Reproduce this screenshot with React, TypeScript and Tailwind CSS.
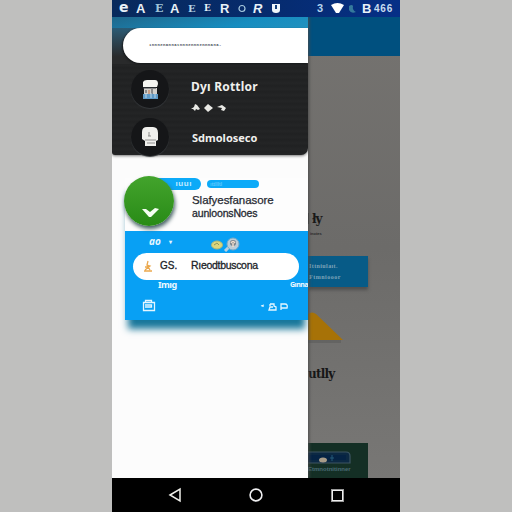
import React from "react";

function StatusBar() {
  return (
    <header className="flex h-[17px] shrink-0 items-center bg-gradient-to-r from-[#082a5c] via-[#062b6c] to-[#062f87] font-['Liberation_Sans'] text-[11px] font-bold leading-none text-[#e8f1f7]">
      <span className="ml-[7px] w-[17px] pb-[2px] font-['DejaVu_Sans'] text-[14px] leading-[15px]">e</span>
      <span className="w-[19px] text-[13px]">A</span>
      <span className="w-[15px] font-['DejaVu_Serif'] text-[11px] text-[#9fc4d8]">E</span>
      <span className="w-[18px] text-[13px]">A</span>
      <span className="w-[16px] font-['DejaVu_Serif'] text-[10px] text-[#b8d6e6]">E</span>
      <span className="w-[16px] font-['DejaVu_Serif'] text-[9px]">E</span>
      <span className="w-[18px] text-[13px]">R</span>
      <svg className="mr-[7px] h-[9px] w-[8px]" viewBox="0 0 8 9" fill="none" stroke="#a9cbe0" strokeWidth="1.2">
        <circle cx="4" cy="4.5" r="3" />
      </svg>
      <span className="w-[18px] text-[13px] italic">R</span>
      <svg className="h-[11px] w-[10px]" viewBox="0 0 10 11">
        <path d="M1 1H9V7Q9 10 5 10Q1 10 1 7Z" fill="#eef6fa" />
        <path d="M4 2h2v4H4z" fill="#123d77" />
      </svg>
      <span className="ml-[36px] w-[14px] text-[11px] text-[#b5d5ee]">3</span>
      <svg className="h-[11px] w-[13px]" viewBox="0 0 13 11">
        <path d="M0 2Q6.500 -2 13 2L8 10H5Z" fill="#fff" />
      </svg>
      <svg className="ml-[4px] h-[10px] w-[10px]" viewBox="0 0 10 10">
        <path d="M1 2Q4 0 5 2Q4 6 8 8Q3 10 1 6Z" fill="#35799c" />
      </svg>
      <span className="ml-[4px] w-[12px] text-[13px]">B</span>
      <span className="text-[10px] tracking-[0.8px] text-[#c8dcf0]">466</span>
    </header>
  );
}

function Page() {
  return (
    <main className="flex h-full w-full flex-col bg-gradient-to-b from-[#757370] via-[#6c6b69] to-[#787775]">
      <div className="h-[39px] shrink-0 bg-[#00507f]" />
      <div className="flex flex-col pl-[196px]">
        <div className="mt-[154px] flex h-[17px] items-center gap-[3px] font-['DejaVu_Serif'] text-[12px] font-bold leading-none text-[#191919]">
          <i className="block h-[11px] w-px bg-[#383838]" />
          <span className="tracking-[-1px]">ły</span>
        </div>
        <div className="mt-[4px] h-[5px] pl-[2px] font-['Liberation_Sans'] text-[4px] font-bold leading-[5px] text-[#292929]">inotes</div>
        <div className="mt-[20px] flex h-[31px] w-[60px] flex-col justify-center gap-[5px] bg-[#075b87] pl-px font-['Liberation_Serif'] text-[6px] font-bold leading-[6px] text-[#7fa5ba] shadow-[0_3px_3px_#50504f]">
          <span className="tracking-[0.4px]">Ittniulaıt.</span>
          <span className="tracking-[0.5px]">Ftmniooor</span>
        </div>
        <svg className="mt-[24px] h-[34px] w-[40px]" viewBox="0 0 40 34">
          <path d="M0 28h33v4H0z" fill="#535250" opacity=".4" />
          <path d="M0 3Q4 0 8 3L35 29H0Z" fill="#a77207" />
        </svg>
        <div className="mt-[20px] h-[18px] font-['DejaVu_Serif'] text-[12px] font-bold leading-[18px] tracking-[-0.8px] text-[#161616]">utlly</div>
        <div className="mt-[60px] flex h-[36px] w-[60px] flex-col bg-[#142f25] pt-[8px]">
          <svg className="h-[14px] w-[45px]" viewBox="0 0 45 14">
            <path d="M0 1H38Q42 1 42 5V12H0" fill="#0c2943" stroke="#3c5563" strokeWidth="1.200" />
            <path d="M0 4H38V9H0Z" fill="#052344" />
            <ellipse cx="15" cy="9" rx="4" ry="2.500" fill="#a89c88" />
            <path d="M24 4V10M22 7H26" stroke="#255b79" />
          </svg>
          <span className="mt-[1px] font-['Liberation_Sans'] text-[6px] font-bold leading-[6px] text-[#4a6c76]">Etmnotnitinner</span>
        </div>
      </div>
    </main>
  );
}

function Account({ book }: { book?: boolean }) {
  return (
    <div className="flex size-[38px] shrink-0 items-center justify-center rounded-full bg-[#151618] shadow-[0_1px_1px_#35383b]">
      {book ? (
        <svg className="mt-[2px] size-[22px]" viewBox="0 0 22 22">
          <path d="M4 3Q5 1 8 1H16Q19 1 19 5L18 8H4Z" fill="#f5f5f1" />
          <path d="M5 9H18V19H5Z" fill="#d3d0cb" />
          <path d="M4 9H17M7 11V14M13 10V18" stroke="#3c4147" />
          <path d="M10 11V15" stroke="#c88f6c" strokeWidth="1.500" />
          <path d="M4 15H19V20H4Z" fill="#5f9ac7" />
          <path d="M7 15V19M12 14V19M16 15V19" stroke="#bdd4e4" />
        </svg>
      ) : (
        <svg className="size-[22px]" viewBox="0 0 22 22">
          <path d="M3 6Q3 1 8 1H14Q19 1 19 7V14L17 15V20H6V15L3 13Z" fill="#f0f0ed" />
          <path d="M10 6V10M9 10H12M6 14H17M8 17H16" stroke="#777" strokeWidth=".8" />
        </svg>
      )}
    </div>
  );
}

function DrawerHeader() {
  return (
    <section className="relative z-10 flex h-[138px] flex-col rounded-br-[7px] rounded-bl-[3px] bg-[#202123] bg-[repeating-linear-gradient(180deg,#242526_0px,#202122_3px,#242526_6px)] shadow-[0_1px_3px_#777]">
      <div className="h-[47px] shrink-0 bg-gradient-to-br from-[#1e688c] via-[#168dc0] via-40% to-[#3098bc] pt-[11px]">
        <div className="h-[36px] bg-gradient-to-b from-[#2a5b75] to-[#292a2b] to-80% pl-[11px]">
          <div className="flex h-[35px] items-center rounded-l-[18px] bg-white pl-[26px] font-['Liberation_Mono'] text-[4px] font-bold leading-none tracking-[0.4px] text-[#444a55] shadow-[-1px_1px_2px_#17191b]">
            <span className="pb-[2px]">ınnnenannatnnnennnennnana-</span>
          </div>
        </div>
      </div>
      <div className="flex h-[44px] items-start pt-[6px] pl-[19px]">
        <Account book />
        <div className="flex flex-col pl-[22px] pt-[9px] font-['Noto_Sans'] text-[12px] font-bold leading-[16px] text-[#f0f0ed]">
          <span className="tracking-[0.2px]">Dyı Rottlor</span>
          <svg className="mt-[9px] h-[8px] w-[38px]" viewBox="0 0 38 8" fill="#e9e9e5">
            <path d="M0 5L3 3L4 0L6 1L9 5L7 6L5 5L4 7L2 5ZM13 4L17 0L22 4L17 8ZM26 3L31 1L35 4L33 7L30 6L31 4Z" />
          </svg>
        </div>
      </div>
      <div className="flex items-start pt-[10px] pl-[19px]">
        <Account />
        <span className="pl-[23px] pt-[7px] font-['Noto_Sans'] text-[11px] font-bold leading-[26px] text-[#f0f0ed]">Sdmoloseco</span>
      </div>
    </section>
  );
}

function PromoCard() {
  return (
    <section className="relative ml-[13px] mt-[23px] flex h-[142px] flex-col bg-[#08a0f4] shadow-[0_12px_7px_-3px_#18779b]">
      <div className="flex h-[53px] flex-col bg-[#fdfdfd] pl-[30px]">
        <div className="flex h-[12px] items-center gap-[6px]">
          <div className="flex h-[12px] w-[46px] items-center justify-end rounded-r-full bg-[#0caaf8] pr-[9px] font-['Liberation_Sans'] text-[8px] font-bold leading-none tracking-[0.6px] text-[#c3eaff]">ıuuı</div>
          <div className="flex h-[8px] w-[52px] items-center rounded-[4px] bg-[#0caaf8] pl-[3px] font-['Liberation_Sans'] text-[6px] leading-none text-[#79d2ff]">ıttllltl</div>
        </div>
        <div className="flex flex-col whitespace-nowrap pl-[37px] pt-[4px] font-['Liberation_Sans'] leading-[13px] text-[#262a32]">
          <span className="text-[11.5px] tracking-[-0.05px] [-webkit-text-stroke:0.25px_#262a32]">Slafyesfanasore</span>
          <span className="text-[10.5px] tracking-[-0.15px] [-webkit-text-stroke:0.3px_#262a32]">aunloonsNoes</span>
        </div>
      </div>
      <div className="flex h-[22px] items-center pl-[24px] font-['Noto_Sans'] text-[10px] font-bold leading-none text-[#e4f6ff]">
        <span className="w-[20px] pb-[3px] italic">ao</span>
        <span className="text-[6px]">▾</span>
        <svg className="ml-auto mr-[68px] mt-[4px] h-[15px] w-[30px]" viewBox="0 0 30 15">
          <ellipse cx="7" cy="8" rx="5.500" ry="4" fill="#dbd67c" stroke="#a7b77b" />
          <path d="M4 8L7 6L9 8" fill="none" stroke="#8f9a5d" />
          <path d="M15 14L19 10" stroke="#b9d1df" strokeWidth="3" />
          <circle cx="23" cy="7" r="6" fill="#bdcdd7" stroke="#78aac8" />
          <circle cx="23" cy="6" r="3" fill="#78828b" />
          <path d="M21 6Q23 3 25 6M23 6V10" fill="none" stroke="#f0dccc" strokeWidth="1.500" />
        </svg>
      </div>
      <div className="ml-[8px] flex h-[27px] w-[166px] shrink-0 items-center rounded-[14px] bg-white pb-[2px] font-['Liberation_Sans'] text-[11px] leading-none text-[#202329]">
        <svg className="ml-[9px] h-[12px] w-[11px]" viewBox="0 0 11 12" fill="none" stroke="#eba94f" strokeWidth="1.300">
          <path d="M6 1L5 5L8 6L3 10M5 5L8 10M2 11H10M3 7H7" />
        </svg>
        <span className="ml-[7px] w-[31px] text-[10px] [-webkit-text-stroke:0.3px_#202329]">GS.</span>
        <span className="text-[10.5px] tracking-[-0.3px] [-webkit-text-stroke:0.3px_#202329]">Rıeodtbuscona</span>
      </div>
      <div className="flex h-[14px] shrink-0 items-start justify-between pl-[33px] font-['Noto_Sans'] text-[9px] font-bold leading-[9px] text-[#edf9ff]">
        <span className="tracking-[-0.5px]">Imıg</span>
        <span className="text-[7px] tracking-[-0.5px]">Gınna</span>
      </div>
      <div className="flex h-[22px] items-center pl-[17px] text-[#e5f6ff]">
        <svg className="h-[13px] w-[14px]" viewBox="0 0 14 13" fill="none" stroke="currentColor" strokeWidth="1.300">
          <path d="M1.500 3.500H12.500V11.500H1.500ZM3.500 3.500V1.500H9.500V3.500M3 8H9.500V6H3" />
        </svg>
        <svg className="ml-auto mr-[20px] mt-[3px] h-[9px] w-[28px]" viewBox="0 0 28 9" fill="none" stroke="currentColor" strokeWidth="1.300">
          <path d="M1 4L4 3M3 4V5" />
          <path d="M10 2H14V4L16 5V8H9L10 5H13M10 2V4" />
          <path d="M21 8V2H25Q28 2 27 6H21" />
        </svg>
      </div>
      <div className="absolute left-[-1px] top-[-2px] flex size-[50px] items-center justify-center rounded-full bg-gradient-to-b from-[#43a42c] to-[#288b16] shadow-[1px_3px_4px_#405c60]">
        <svg className="ml-[3px] mt-[23px] h-[11px] w-[18px]" viewBox="0 0 18 11">
          <path d="M0 2L4 2L8 5L13 1L17 2L9 10H7Z" fill="#f5fff2" />
        </svg>
      </div>
    </section>
  );
}

export default function App() {
  return (
    <div className="flex h-[512px] w-[512px] justify-center overflow-hidden bg-[#bfbfbe]">
      <div className="flex h-full w-[288px] flex-col">
        <StatusBar />
        <div className="relative h-[461px] shrink-0 overflow-hidden">
          <Page />
          <aside className="absolute inset-y-0 left-0 flex w-[196px] flex-col overflow-hidden bg-[#fcfcfc] shadow-[1px_0_3px_#4b4b4b]">
            <DrawerHeader />
            <PromoCard />
          </aside>
        </div>
        <nav className="flex h-[34px] shrink-0 items-center bg-black pl-[56px]">
          <svg className="h-[16px] w-[14px]" viewBox="0 0 14 16" fill="none" stroke="#eeeee9" strokeWidth="1.500">
            <path d="M2 8L12 2V14Z" />
          </svg>
          <svg className="ml-[67px] size-[14px]" viewBox="0 0 14 14" fill="none" stroke="#eeeef0" strokeWidth="1.600">
            <circle cx="7" cy="7" r="5.900" />
          </svg>
          <div className="ml-[69px] size-[11px] border-[1.5px] border-[#eee] outline-[0.5px] outline-[#999]" />
        </nav>
      </div>
    </div>
  );
}
